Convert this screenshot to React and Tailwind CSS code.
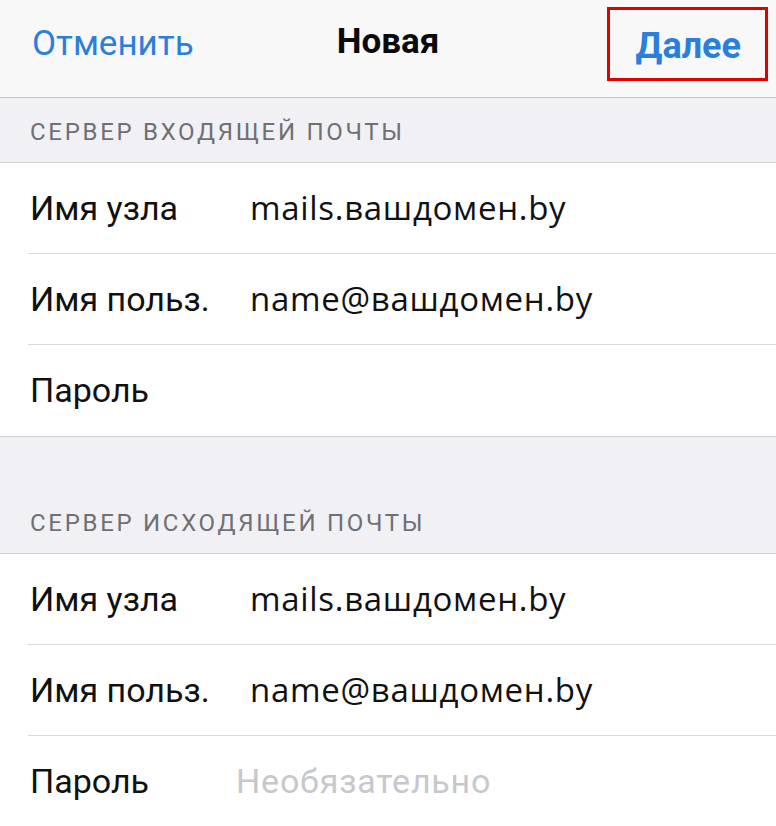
const incoming = [
  { label: "Имя узла", value: "mails.вашдомен.by" },
  { label: "Имя польз.", value: "name@вашдомен.by" },
  { label: "Пароль", value: "" },
];

const outgoing = [
  { label: "Имя узла", value: "mails.вашдомен.by" },
  { label: "Имя польз.", value: "name@вашдомен.by" },
  { label: "Пароль", placeholder: "Необязательно" },
];

function Row({ label, value, placeholder, last }) {
  return (
    <div className="flex h-[91px] items-stretch bg-white pl-[28px]">
      <div className={`flex flex-1 items-center ${last ? "" : "border-b border-[#d9d9dc]"}`}>
        <span className="w-[208px] shrink-0 pl-[2px] font-['Roboto'] text-[34px] text-[#111]">{label}</span>
        {value ? (
          <span className="pl-[14px] font-['Open_Sans'] text-[33px] tracking-[0.7px] text-[#111]">{value}</span>
        ) : placeholder ? (
          <span className="font-['Roboto'] text-[34px] tracking-[0.8px] text-[#c7c7cc]">{placeholder}</span>
        ) : null}
      </div>
    </div>
  );
}

function Section({ title, rows, tall }) {
  return (
    <>
      <div className={`flex items-end bg-[#f1f1f5] px-[30px] pb-[18px] border-b border-[#d2d2d6] ${tall ? "h-[117px]" : "h-[65px]"}`}>
        <span className="font-['Roboto'] text-[24px] uppercase leading-none tracking-[2.7px] text-[#6f6f74]">{title}</span>
      </div>
      <div className="border-b border-[#cfcfd3]">
        {rows.map((r, i) => (
          <Row key={i} {...r} last={i === rows.length - 1} />
        ))}
      </div>
    </>
  );
}

export default function App() {
  return (
    <div className="h-[826px] w-[776px] overflow-hidden bg-[#f1f1f5] font-['Roboto',sans-serif]">
      <div className="relative flex h-[98px] items-center justify-between border-b border-[#c4c4c8] bg-[#f8f8f8] pl-[32px] pr-[35px]">
        <span className="pb-[8px] text-[35px] text-[#2b7fdc]">Отменить</span>
        <span className="absolute left-1/2 top-[16px] -translate-x-1/2 text-[35px] font-bold text-[#0a0a0a]">Новая</span>
        <span className="pb-[6px] text-[36px] font-bold text-[#2b7fdc]">Далее</span>
        <div className="absolute left-[607px] top-[7px] h-[74px] w-[161px] border-[3px] border-[#e00000]" />
      </div>
      <Section title="Сервер входящей почты" rows={incoming} />
      <Section title="Сервер исходящей почты" rows={outgoing} tall />
    </div>
  );
}
